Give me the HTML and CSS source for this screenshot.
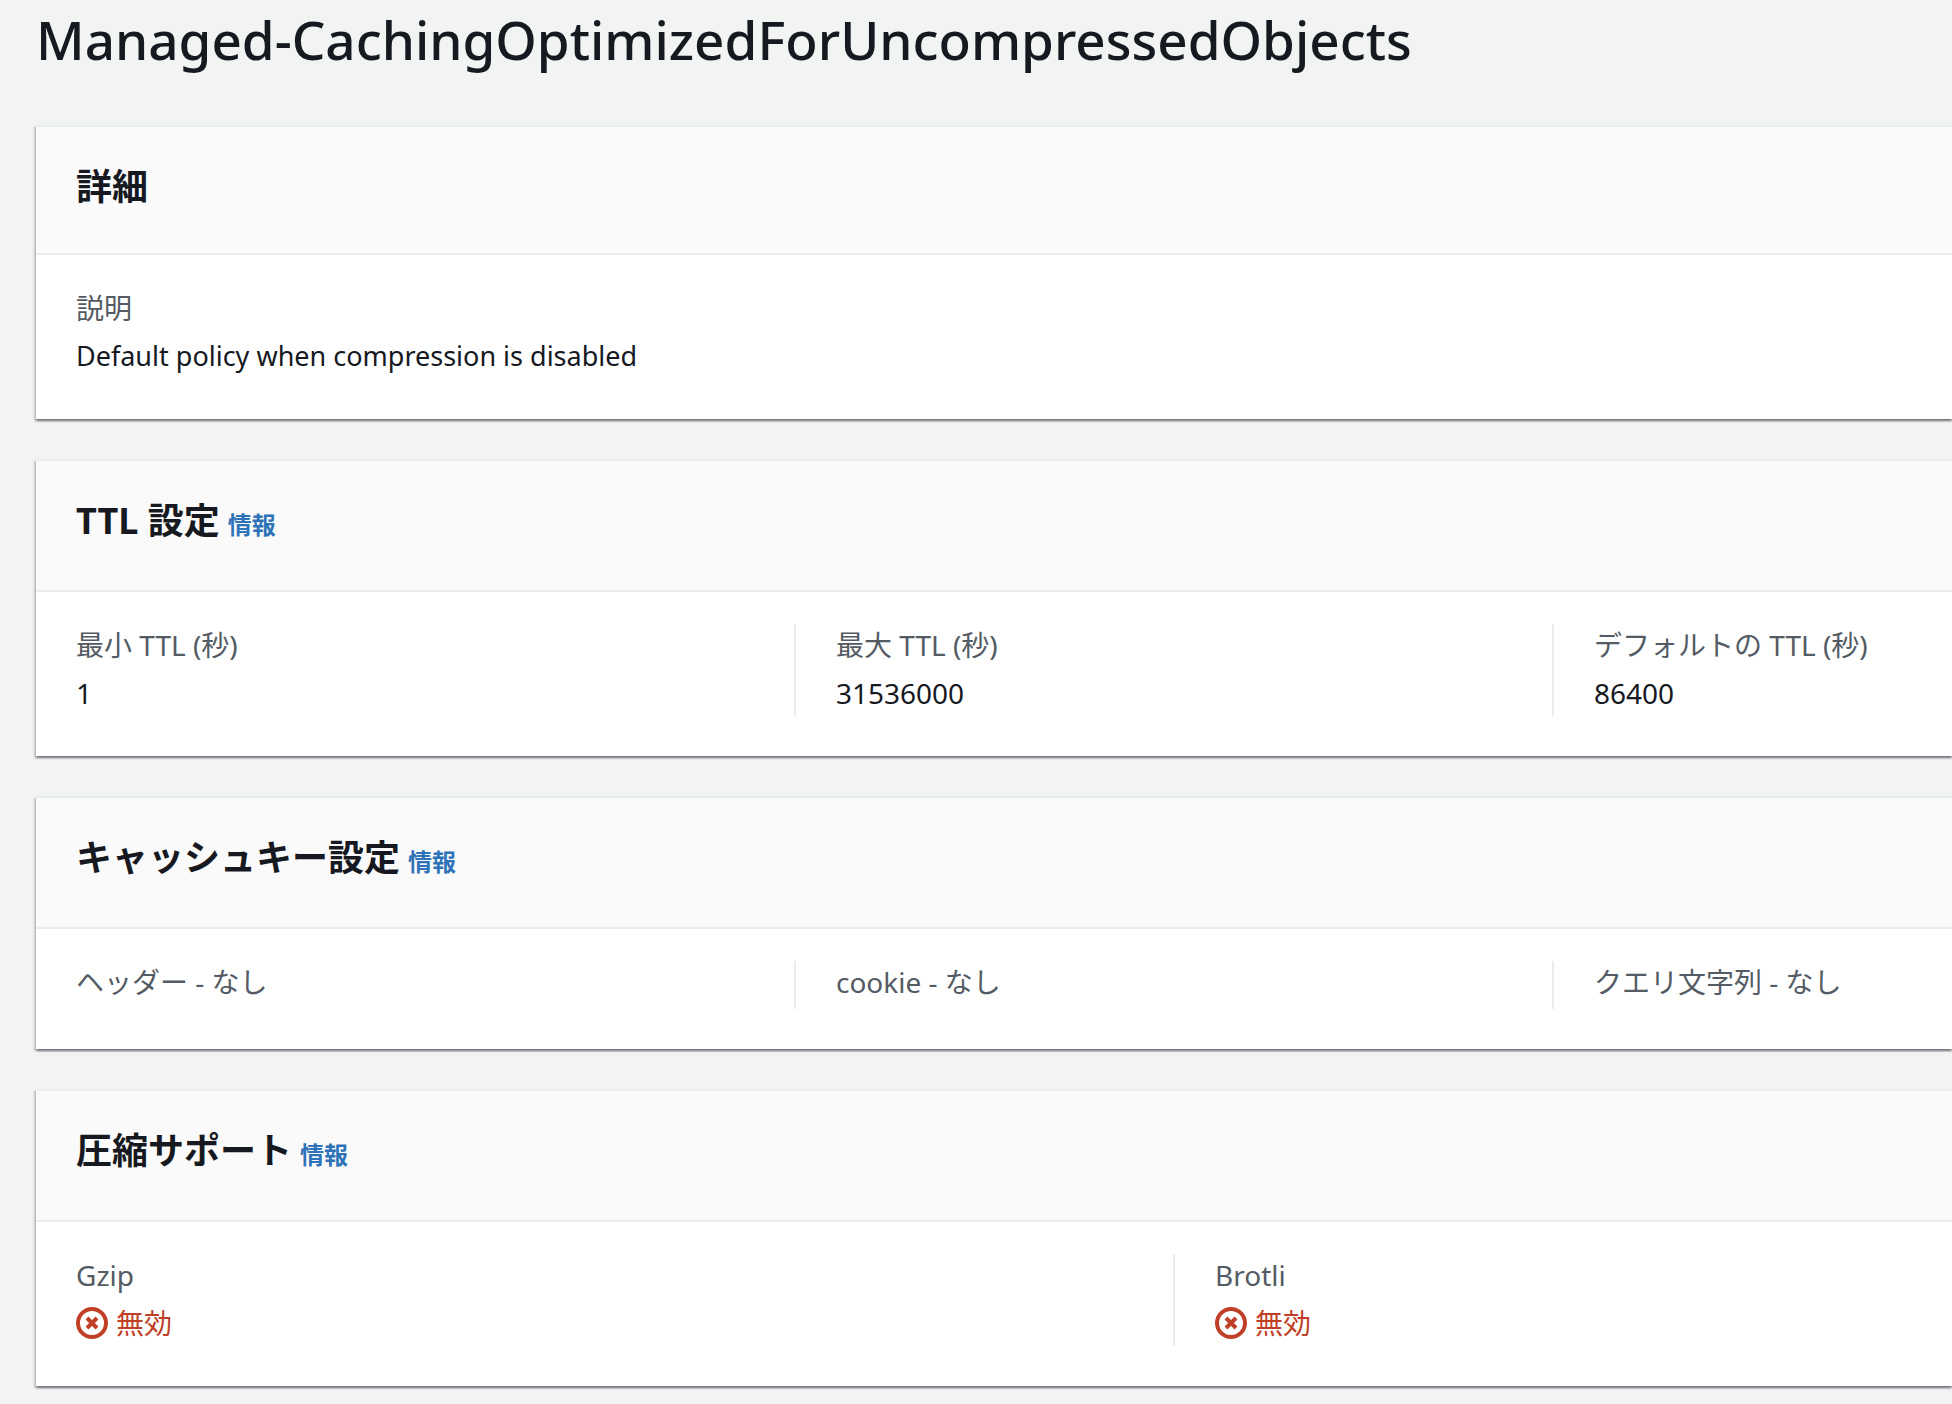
FILE: index.html
```html
<!DOCTYPE html>
<html lang="ja">
  <head>
    <meta charset="UTF-8" />
    <meta name="viewport" content="width=device-width, initial-scale=1.0" />
    <title>Managed-CachingOptimizedForUncompressedObjects</title>
    <link rel="stylesheet" href="styles.css" />
  </head>
  <body>
    <main class="page">
      <h1>Managed-CachingOptimizedForUncompressedObjects</h1>

      <section class="panel">
        <div class="panel-header">
          <h2>詳細</h2>
        </div>
        <dl class="columns">
          <div class="column">
            <dt>説明</dt>
            <dd class="description">Default policy when compression is disabled</dd>
          </div>
        </dl>
      </section>

      <section class="panel">
        <div class="panel-header with-info">
          <h2>TTL 設定</h2>
          <a class="info" href="#ttl">情報</a>
        </div>
        <dl class="columns three">
          <div class="column">
            <dt>最小 TTL (秒)</dt>
            <dd>1</dd>
          </div>
          <div class="column">
            <dt>最大 TTL (秒)</dt>
            <dd>31536000</dd>
          </div>
          <div class="column">
            <dt>デフォルトの TTL (秒)</dt>
            <dd>86400</dd>
          </div>
        </dl>
      </section>

      <section class="panel">
        <div class="panel-header with-info">
          <h2>キャッシュキー設定</h2>
          <a class="info" href="#cache-key">情報</a>
        </div>
        <div class="columns three">
          <div class="column key">ヘッダー - なし</div>
          <div class="column key">cookie - なし</div>
          <div class="column key">クエリ文字列 - なし</div>
        </div>
      </section>

      <section class="panel">
        <div class="panel-header with-info">
          <h2>圧縮サポート</h2>
          <a class="info" href="#compression">情報</a>
        </div>
        <dl class="columns two">
          <div class="column">
            <dt>Gzip</dt>
            <dd class="status">
              <svg class="icon" viewBox="0 0 32 32" aria-hidden="true">
                <circle cx="16" cy="16" r="14" />
                <path d="M11 11l10 10M21 11l-10 10" />
              </svg>
              無効
            </dd>
          </div>
          <div class="column">
            <dt>Brotli</dt>
            <dd class="status">
              <svg class="icon" viewBox="0 0 32 32" aria-hidden="true">
                <circle cx="16" cy="16" r="14" />
                <path d="M11 11l10 10M21 11l-10 10" />
              </svg>
              無効
            </dd>
          </div>
        </dl>
      </section>
    </main>
  </body>
</html>
```
FILE: styles.css
```css
* {
  box-sizing: border-box;
}

body {
  margin: 0;
  background: #f2f3f3;
  color: #16191f;
  font-family: "Noto Sans", "Noto Sans CJK JP", sans-serif;
  font-size: 28px;
  font-weight: 400;
  line-height: 42px;
}

.page {
  display: flex;
  flex-direction: column;
  gap: 40px;
  padding: 0 0 18px 36px;
}

h1 {
  margin: 0 0 5px;
  font-size: 53px;
  font-weight: 500;
  line-height: 80px;
}

.panel {
  background: #fff;
  border-top: 2px solid #eaeded;
  box-shadow: 0 2px 2px rgba(0, 7, 22, 0.35), 2px 2px 2px rgba(0, 7, 22, 0.15),
    -2px 2px 2px rgba(0, 7, 22, 0.15);
}

.panel-header {
  display: flex;
  align-items: baseline;
  gap: 8px;
  padding: 31px 40px 37px;
  background: #fafafa;
  border-bottom: 2px solid #eaeded;
}

.panel-header.with-info {
  padding-bottom: 40px;
}

h2 {
  margin: 0;
  font-size: 36px;
  font-weight: 700;
  line-height: 58px;
}

.info {
  color: #2e73b8;
  font-size: 24px;
  font-weight: 700;
  text-decoration: none;
}

.info:hover {
  text-decoration: underline;
}

.columns {
  display: grid;
  margin: 0;
  padding: 32px 0 40px;
}

/* the last column takes what is left of the window */
.columns.two {
  grid-template-columns: calc((100% + 358px) / 2) 1fr;
}

.columns.three {
  grid-template-columns: repeat(2, calc((100% + 358px) / 3)) 1fr;
}

.column {
  padding: 0 40px 2px;
}

.column + .column {
  border-left: 2px solid #eaeded;
}

dt,
.key {
  color: #545b64;
}

dt {
  margin-bottom: 6px;
}

.key {
  padding-bottom: 6px;
}

dd {
  margin: 0;
}

.description {
  font-size: 27px;
}

.status {
  display: flex;
  align-items: center;
  gap: 8px;
  color: #bf4026;
}

.icon {
  width: 32px;
  height: 32px;
  fill: none;
  stroke: currentColor;
  stroke-width: 4;
}
```
